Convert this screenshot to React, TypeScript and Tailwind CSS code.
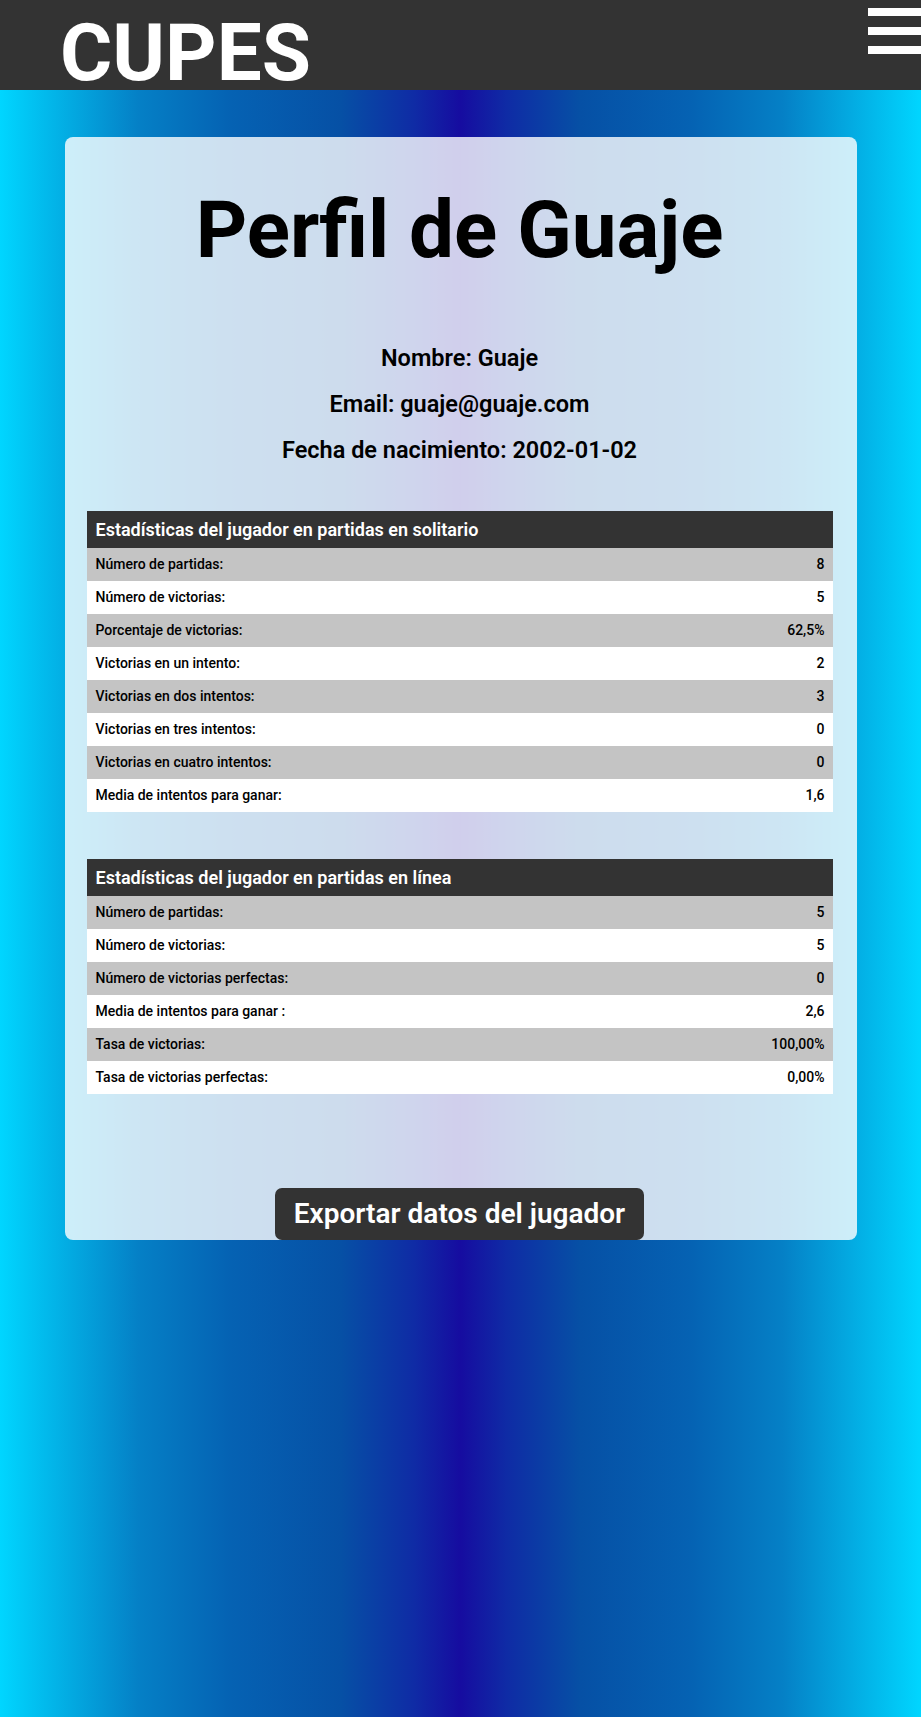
import React from "react";

const solitario = [
  ["Número de partidas:", "8"],
  ["Número de victorias:", "5"],
  ["Porcentaje de victorias:", "62,5%"],
  ["Victorias en un intento:", "2"],
  ["Victorias en dos intentos:", "3"],
  ["Victorias en tres intentos:", "0"],
  ["Victorias en cuatro intentos:", "0"],
  ["Media de intentos para ganar:", "1,6"],
];

const enLinea = [
  ["Número de partidas:", "5"],
  ["Número de victorias:", "5"],
  ["Número de victorias perfectas:", "0"],
  ["Media de intentos para ganar :", "2,6"],
  ["Tasa de victorias:", "100,00%"],
  ["Tasa de victorias perfectas:", "0,00%"],
];

function StatsTable({ title, rows }: { title: string; rows: string[][] }) {
  return (
    <table className="w-full border-collapse">
      <thead>
        <tr className="bg-[#333333] text-white">
          <th colSpan={2} className="h-[37px] pl-[9px] text-left text-[18px] font-semibold">
            {title}
          </th>
        </tr>
      </thead>
      <tbody>
        {rows.map((row, i) => (
          <tr key={row[0]} className={i % 2 === 0 ? "bg-[#c4c4c4]" : "bg-white"}>
            <td className="h-[33px] pl-[9px] text-[14px] font-medium text-black">{row[0]}</td>
            <td className="h-[33px] pr-[8px] text-right text-[14px] font-medium text-black">{row[1]}</td>
          </tr>
        ))}
      </tbody>
    </table>
  );
}

export default function App() {
  return (
    <div className="min-h-[1717px] overflow-x-hidden bg-[linear-gradient(90deg,#00d6ff_0%,#03a8e0_8%,#0580c6_15%,#0562b3_25%,#0650a5_37%,#0f2ba5_45%,#160ca0_50%,#0f2ba5_55%,#0650a5_63%,#0562b3_75%,#0580c6_85%,#03a8e0_92%,#00d6ff_100%)] font-['Roboto',sans-serif]">
      <header className="flex h-[90px] items-start justify-between bg-[#333333]">
        <h1 className="ml-[60px] mt-[17px] text-[80px] font-bold leading-[0.9] text-white">CUPES</h1>
        <div className="mr-[-12px] mt-[8px] flex w-[65px] flex-col gap-[11px]">
          <span className="block h-[8px] bg-white"></span>
          <span className="block h-[8px] bg-white"></span>
          <span className="block h-[8px] bg-white"></span>
        </div>
      </header>

      <main className="flex justify-center pt-[47px]">
        <section className="flex w-[792px] flex-col items-center rounded-[8px] bg-white/80 pl-[22px] pr-[24px] pt-[53px]">
          <h2 className="text-[80px] font-bold leading-none text-black">Perfil de Guaje</h2>
          <div className="mt-[65px] flex flex-col items-center text-[23.5px] font-semibold text-black">
            <p className="leading-[46px]">Nombre: Guaje</p>
            <p className="leading-[46px]">Email: guaje@guaje.com</p>
            <p className="leading-[46px]">Fecha de nacimiento: 2002-01-02</p>
          </div>
          <div className="mt-[38px] w-full">
            <StatsTable title="Estadísticas del jugador en partidas en solitario" rows={solitario} />
          </div>
          <div className="mt-[47px] w-full">
            <StatsTable title="Estadísticas del jugador en partidas en línea" rows={enLinea} />
          </div>
          <button className="mt-[94px] h-[52px] rounded-[7px] bg-[#333333] px-[19px] text-[28px] font-semibold text-white">
            Exportar datos del jugador
          </button>
        </section>
      </main>
    </div>
  );
}
